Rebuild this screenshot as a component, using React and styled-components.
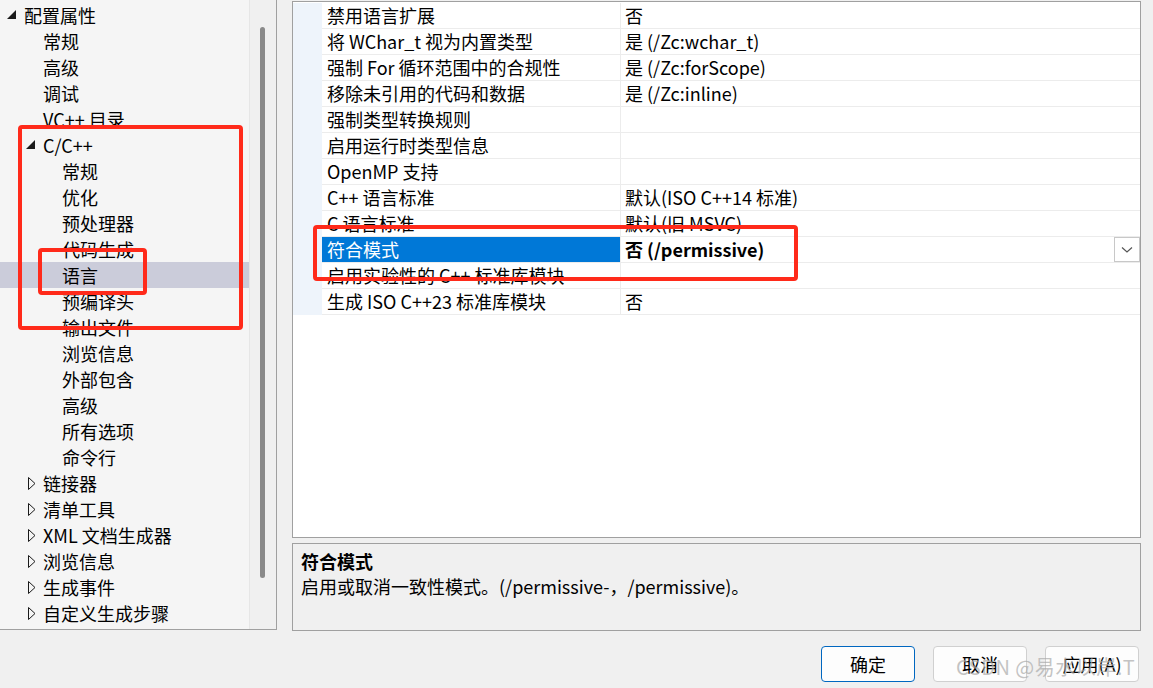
import React from 'react';
import styled, { createGlobalStyle } from 'styled-components';

const GlobalStyle = createGlobalStyle`
    html, body {
        margin: 0;
        padding: 0;
        background: #f0f0f0;
    }
    body {
        font-family: "Noto Sans CJK SC", "Noto Sans", sans-serif;
        color: #000;
    }
`;

const Window = styled.div`
    position: relative;
    width: 1153px;
    height: 688px;
    overflow: hidden;
    background: #f0f0f0;
    display: flex;
    flex-direction: column;
    font-size: 18px;
`;

const Main = styled.div`
    display: flex;
    gap: 15px;
    height: 631px;
`;

const TreePanel = styled.div`
    width: 276px;
    height: 629px;
    border-right: 1px solid #a0a0a0;
    border-bottom: 1px solid #a0a0a0;
    display: flex;
    background: #f0f0f0;
`;

const TreeList = styled.div`
    width: 249px;
    padding-top: 2px;
    background: #f5f5f5;
    border-right: 1px solid #e6e6e6;
`;

const TreeRow = styled.div`
    height: 26px;
    display: flex;
    align-items: center;
    padding-left: ${p => 5 + p.$level * 19}px;
    background: ${p => (p.$selected ? '#cbccda' : 'transparent')};
    white-space: nowrap;
    line-height: 26px;
`;

const Toggle = styled.span`
    width: 19px;
    height: 26px;
    display: flex;
    align-items: center;
    padding-left: ${p => (p.$open ? '2px' : '4px')};
    box-sizing: border-box;
`;

const ScrollTrack = styled.div`
    flex: 1;
    display: flex;
    justify-content: center;
    padding-top: 27px;
`;

const ScrollThumb = styled.div`
    width: 5px;
    height: 551px;
    margin-left: -2px;
    border-radius: 3px;
    background: #8a8a8a;
`;

const RightColumn = styled.div`
    width: 849px;
    display: flex;
    flex-direction: column;
    gap: 5px;
`;

const GridPanel = styled.div`
    margin-top: 1px;
    height: 536px;
    border: 1px solid #a0a0a0;
    background: #fff;
    padding-top: 1px;
`;

const PropRow = styled.div`
    height: 25px;
    display: flex;
    border-bottom: 1px solid #ececec;
    line-height: 25px;
`;

const Strip = styled.div`
    width: 29px;
    background: #eef4fb;
    margin-bottom: -1px;
`;

const NameCell = styled.div`
    width: 293px;
    padding-left: 5px;
    white-space: nowrap;
    overflow: hidden;
    background: ${p => (p.$selected ? '#0078d7' : 'transparent')};
    color: ${p => (p.$selected ? '#fff' : '#000')};
`;

const ValueCell = styled.div`
    flex: 1;
    display: flex;
    align-items: center;
    padding-left: 4px;
    border-left: 1px solid #ececec;
    font-weight: ${p => (p.$bold ? 700 : 400)};
    white-space: nowrap;
`;

const DropButton = styled.div`
    margin-left: auto;
    width: 24px;
    height: 23px;
    border: 1px solid #c8c8c8;
    background: #fff;
    display: flex;
    align-items: center;
    justify-content: center;
`;

const DescPanel = styled.div`
    height: 88px;
    border: 1px solid #a0a0a0;
    background: #f0f0f0;
    padding: 4px 8px;
    box-sizing: border-box;
`;

const DescTitle = styled.div`
    font-weight: 700;
    line-height: 26px;
`;

const DescText = styled.div`
    line-height: 24px;
`;

const ButtonBar = styled.div`
    display: flex;
    justify-content: flex-end;
    gap: 18px;
    padding: 15px 14px 0 0;
`;

const Button = styled.div`
    width: 94px;
    height: 36px;
    box-sizing: border-box;
    border-radius: 4px;
    border: 1px solid ${p => (p.$primary ? '#0067c0' : '#d0d0d0')};
    background: #fdfdfd;
    display: flex;
    align-items: center;
    justify-content: center;
`;

const Mark = styled.div`
    position: absolute;
    left: ${p => p.$x}px;
    top: ${p => p.$y}px;
    width: ${p => p.$w}px;
    height: ${p => p.$h}px;
    box-sizing: border-box;
    border: 4px solid #ff2a1a;
    border-radius: 4px;
    pointer-events: none;
`;

const Watermark = styled.div`
    position: absolute;
    left: 956px;
    top: 652px;
    font-size: 20px;
    color: rgba(170, 170, 170, 0.7);
    white-space: nowrap;
    letter-spacing: 0.5px;
    pointer-events: none;
`;

const OpenArrow = () => (
    <svg width="10" height="10" viewBox="0 0 10 10">
        <polygon points="9,0 9,9 0,9" fill="#1a1a1a" />
    </svg>
);

const ClosedArrow = () => (
    <svg width="8" height="13" viewBox="0 0 8 13">
        <polygon points="0.5,0.5 7,6.5 0.5,12.5" fill="none" stroke="#1a1a1a" strokeWidth="1" />
    </svg>
);

const tree = [
    { label: '配置属性', level: 0, open: true },
    { label: '常规', level: 1 },
    { label: '高级', level: 1 },
    { label: '调试', level: 1 },
    { label: 'VC++ 目录', level: 1 },
    { label: 'C/C++', level: 1, open: true },
    { label: '常规', level: 2 },
    { label: '优化', level: 2 },
    { label: '预处理器', level: 2 },
    { label: '代码生成', level: 2 },
    { label: '语言', level: 2, selected: true },
    { label: '预编译头', level: 2 },
    { label: '输出文件', level: 2 },
    { label: '浏览信息', level: 2 },
    { label: '外部包含', level: 2 },
    { label: '高级', level: 2 },
    { label: '所有选项', level: 2 },
    { label: '命令行', level: 2 },
    { label: '链接器', level: 1, closed: true },
    { label: '清单工具', level: 1, closed: true },
    { label: 'XML 文档生成器', level: 1, closed: true },
    { label: '浏览信息', level: 1, closed: true },
    { label: '生成事件', level: 1, closed: true },
    { label: '自定义生成步骤', level: 1, closed: true },
];

const props = [
    ['禁用语言扩展', '否'],
    ['将 WChar_t 视为内置类型', '是 (/Zc:wchar_t)'],
    ['强制 For 循环范围中的合规性', '是 (/Zc:forScope)'],
    ['移除未引用的代码和数据', '是 (/Zc:inline)'],
    ['强制类型转换规则', ''],
    ['启用运行时类型信息', ''],
    ['OpenMP 支持', ''],
    ['C++ 语言标准', '默认(ISO C++14 标准)'],
    ['C 语言标准', '默认(旧 MSVC)'],
    ['符合模式', '否 (/permissive)', true],
    ['启用实验性的 C++ 标准库模块', ''],
    ['生成 ISO C++23 标准库模块', '否'],
];

export default function App() {
    return (
        <Window>
            <GlobalStyle />
            <Main>
                <TreePanel>
                    <TreeList>
                        {tree.map((item, i) => (
                            <TreeRow key={i} $level={item.level} $selected={item.selected}>
                                <Toggle $open={item.open}>
                                    {item.open && <OpenArrow />}
                                    {item.closed && <ClosedArrow />}
                                </Toggle>
                                {item.label}
                            </TreeRow>
                        ))}
                    </TreeList>
                    <ScrollTrack>
                        <ScrollThumb />
                    </ScrollTrack>
                </TreePanel>
                <RightColumn>
                    <GridPanel>
                        {props.map(([name, value, sel], i) => (
                            <PropRow key={i}>
                                <Strip />
                                <NameCell $selected={sel}>{name}</NameCell>
                                <ValueCell $bold={sel}>
                                    {value}
                                    {sel && (
                                        <DropButton>
                                            <svg width="12" height="8" viewBox="0 0 12 8">
                                                <polyline points="1,1.5 6,6 11,1.5" fill="none" stroke="#555" strokeWidth="1.2" />
                                            </svg>
                                        </DropButton>
                                    )}
                                </ValueCell>
                            </PropRow>
                        ))}
                    </GridPanel>
                    <DescPanel>
                        <DescTitle>符合模式</DescTitle>
                        <DescText>启用或取消一致性模式。(/permissive-，/permissive)。</DescText>
                    </DescPanel>
                </RightColumn>
            </Main>
            <ButtonBar>
                <Button $primary>确定</Button>
                <Button>取消</Button>
                <Button>应用(A)</Button>
            </ButtonBar>
            <Mark $x={18} $y={125} $w={225} $h={205} />
            <Mark $x={38} $y={248} $w={109} $h={47} />
            <Mark $x={313} $y={225} $w={485} $h={56} />
            <Watermark>CSDN @易水以岸.T</Watermark>
        </Window>
    );
}
